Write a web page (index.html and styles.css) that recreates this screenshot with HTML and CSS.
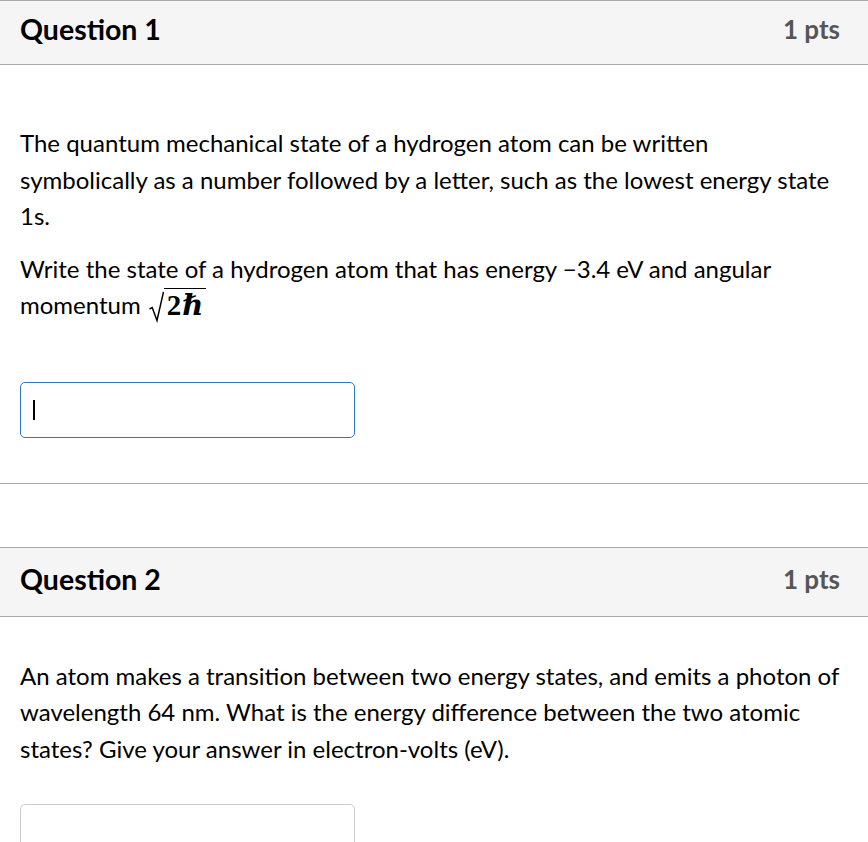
FILE: index.html
```html
<!DOCTYPE html>
<html lang="en">
<head>
    <meta charset="UTF-8">
    <meta name="viewport" content="width=device-width, initial-scale=1.0">
    <title>Quiz</title>
    <link rel="stylesheet" href="styles.css">
</head>
<body>

<div class="question first">
    <div class="question-header">
        <h2>Question 1</h2>
        <span class="points">1 pts</span>
    </div>
    <div class="question-body">
        <div class="question-text spaced">
            <p>The quantum mechanical state of a hydrogen atom can be written symbolically as a number followed by a letter, such as the lowest energy state 1s.</p>
            <p>Write the state of a hydrogen atom that has energy −3.4 eV and angular momentum
                <span class="math">
                    <svg class="radical" width="15" height="32" viewBox="0 0 15 32">
                        <path d="M0.5 18 L3.2 16.5 L8 29.5 L14.5 0.8" fill="none" stroke="#000" stroke-width="1.5"/>
                    </svg><span class="radicand">2ℏ</span>
                </span>
            </p>
        </div>
        <div class="answer active"><span class="caret"></span></div>
    </div>
</div>

<hr class="divider">

<div class="question">
    <div class="question-header">
        <h2>Question 2</h2>
        <span class="points">1 pts</span>
    </div>
    <div class="question-body">
        <div class="question-text">
            <p>An atom makes a transition between two energy states, and emits a photon of wavelength 64 nm. What is the energy difference between the two atomic states? Give your answer in electron-volts (eV).</p>
        </div>
        <div class="answer"></div>
    </div>
</div>

</body>
</html>
```

FILE: styles.css
```css
body {
    margin: 0;
    font-family: Lato, "Liberation Sans", sans-serif;
    color: #000;
    background: #fff;
}

.question-header {
    display: flex;
    justify-content: space-between;
    align-items: center;
    box-sizing: border-box;
    height: 70px;
    padding: 0 28px 6px 20px;
    background: #f5f5f5;
    border-top: 1px solid #aaa;
    border-bottom: 1px solid #aaa;
}

.first .question-header {
    height: 65px;
    padding-bottom: 7px;
}

.question-header h2 {
    margin: 0;
    font-size: 28.5px;
    font-weight: 700;
}

.points {
    font-size: 26px;
    font-weight: 700;
    color: #555;
}

.question-body {
    padding: 41px 28px 0 20px;
}

.question-text p {
    margin: 0 0 16px;
    font-size: 24px;
    line-height: 36.5px;
}

.question-text.spaced {
    padding: 19px 0 5px;
}

.math {
    display: inline-flex;
    align-items: flex-end;
    vertical-align: -9px;
    margin-left: 2px;
    line-height: 1;
}

.radical {
    display: block;
}

.radicand {
    border-top: 1.5px solid #000;
    padding: 2px 2px 3px 3px;
    font-family: "Liberation Serif", "DejaVu Serif", serif;
    font-size: 29px;
    font-weight: 700;
    letter-spacing: 1px;
}

.answer {
    width: 321px;
    height: 54px;
    margin-top: 37px;
    padding-left: 12px;
    border: 1px solid #ccc;
    border-radius: 5px;
    display: flex;
    align-items: center;
}

.answer.active {
    border-color: #2d78c2;
}

.caret {
    width: 2px;
    height: 20px;
    background: #000;
}

.first .answer {
    margin-bottom: 45px;
}

.divider {
    margin: 0 0 63px;
    border: none;
    border-top: 1px solid #aaa;
}
```
